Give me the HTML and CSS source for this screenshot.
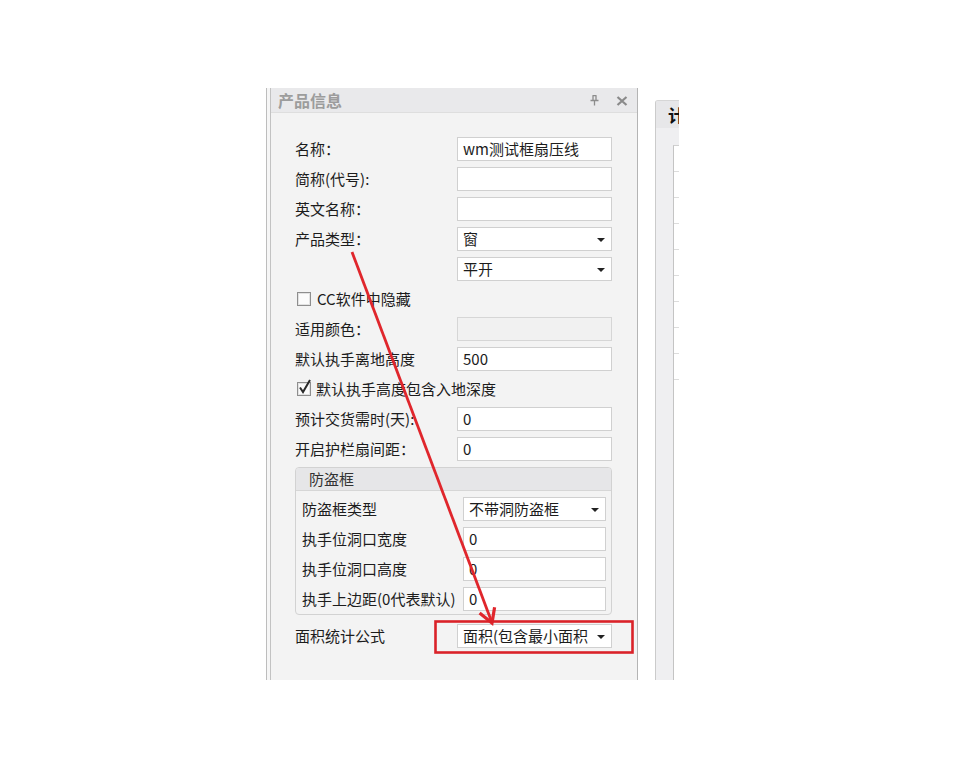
FILE: index.html
```html
<!DOCTYPE html>
<html lang="zh-CN">
<head>
<meta charset="utf-8">
<title>产品信息</title>
<link rel="stylesheet" href="styles.css">
</head>
<body>
<div class="stage">
  <section class="panel">
    <div class="panel-inner">
      <header class="panel-title">
        <span class="title-text">产品信息</span>
        <span class="tools">
          <svg class="pin" width="9" height="11" viewBox="0 0 9 11"><path d="M2.5 0.5h4M3 0.5v5M6 0.5v5M0.5 5.5h8M4.5 5.5v5" stroke="#8c8c8c" stroke-width="1.3" fill="none"/></svg>
          <svg class="close" width="12" height="10" viewBox="0 0 12 10"><path d="M1.5 1l9 8M10.5 1l-9 8" stroke="#8a8a8a" stroke-width="2.2" fill="none"/></svg>
        </span>
      </header>
      <div class="panel-body">
        <div class="form">
          <label class="lbl">名称：</label>
          <div class="field">wm测试框扇压线</div>

          <label class="lbl">简称(代号):</label>
          <div class="field"></div>

          <label class="lbl">英文名称：</label>
          <div class="field"></div>

          <label class="lbl">产品类型：</label>
          <div class="field select">窗<span class="caret"></span></div>

          <span class="lbl"></span>
          <div class="field select">平开<span class="caret"></span></div>

          <div class="check-row">
            <span class="box"></span><span class="check-text">CC软件中隐藏</span>
          </div>

          <label class="lbl">适用颜色：</label>
          <div class="field disabled"></div>

          <label class="lbl">默认执手离地高度</label>
          <div class="field">500</div>

          <div class="check-row">
            <span class="box checked"><svg width="15" height="16" viewBox="0 0 15 16"><path d="M3 8.5l3 4.5 7-12" stroke="#2b2b2b" stroke-width="2" fill="none"/></svg></span><span class="check-text">默认执手高度包含入地深度</span>
          </div>

          <label class="lbl">预计交货需时(天):</label>
          <div class="field">0</div>

          <label class="lbl">开启护栏扇间距：</label>
          <div class="field">0</div>

          <fieldset class="group">
            <div class="group-head">防盗框</div>
            <div class="group-body">
              <label class="lbl">防盗框类型</label>
              <div class="field select">不带洞防盗框<span class="caret"></span></div>

              <label class="lbl">执手位洞口宽度</label>
              <div class="field">0</div>

              <label class="lbl">执手位洞口高度</label>
              <div class="field">0</div>

              <label class="lbl">执手上边距(0代表默认)</label>
              <div class="field">0</div>
            </div>
          </fieldset>

          <label class="lbl last">面积统计公式</label>
          <div class="field select last">面积(包含最小面积<span class="caret"></span></div>
        </div>
      </div>
    </div>
  </section>

  <section class="side">
    <header class="side-head">计</header>
    <div class="side-body">
      <div class="side-grid">
        <div class="side-row"></div><div class="side-row"></div><div class="side-row"></div>
        <div class="side-row"></div><div class="side-row"></div><div class="side-row"></div>
        <div class="side-row"></div><div class="side-row"></div><div class="side-row"></div>
      </div>
    </div>
  </section>

  <svg class="annot" width="980" height="784" viewBox="0 0 980 784">
    <line x1="352" y1="252" x2="491" y2="620" stroke="#e0262c" stroke-width="2.8"/>
    <polyline points="479.6,612.9 492,623 494.6,607.2" stroke="#e0262c" stroke-width="3.2" fill="none" stroke-linejoin="miter"/>
    <rect x="435.5" y="621.5" width="197" height="31" stroke="#da2229" stroke-width="2.6" fill="none"/>
  </svg>
</div>
</body>
</html>
```

FILE: styles.css
```css
html, body {
  margin: 0;
  padding: 0;
  background: #ffffff;
}

body {
  font-family: "Noto Sans CJK SC", "Microsoft YaHei", sans-serif;
  font-size: 15px;
  color: #1c1c1c;
}

.stage {
  position: relative;
  width: 980px;
  height: 784px;
  box-sizing: border-box;
  padding: 88px 0 0 266px;
  display: flex;
  align-items: flex-start;
}

/* ---------- main panel ---------- */
.panel {
  width: 372px;
  height: 592px;
  box-sizing: border-box;
  border-left: 1px solid #bdbdbd;
  padding-left: 3px;
  background: #f6f6f6;
}

.panel-inner {
  height: 100%;
  box-sizing: border-box;
  border-left: 1px solid #c2c2c2;
  border-right: 1px solid #b4b4b4;
  background: #f3f3f3;
  display: flex;
  flex-direction: column;
}

.panel-title {
  height: 24px;
  flex: none;
  display: flex;
  align-items: center;
  justify-content: space-between;
  padding: 0 9px 0 7px;
  background: #e9e9eb;
  border-bottom: 1px solid #dedede;
}

.title-text {
  font-size: 16px;
  font-weight: bold;
  color: #9c9c9c;
  line-height: 24px;
}

.tools {
  display: flex;
  align-items: center;
  gap: 17px;
  padding-top: 1px;
}

.panel-body {
  flex: 1;
  padding: 24px 0 0 24px;
}

.form {
  width: 317px;
  display: grid;
  grid-template-columns: 162px 155px;
  grid-auto-rows: 24px;
  row-gap: 6px;
}

.lbl {
  display: block;
  height: 24px;
  line-height: 24px;
  white-space: nowrap;
  color: #1c1c1c;
}

.field {
  position: relative;
  height: 24px;
  box-sizing: border-box;
  border: 1px solid #d0d0d0;
  background: #ffffff;
  padding-left: 5px;
  line-height: 22px;
  color: #1c1c1c;
  white-space: nowrap;
  overflow: hidden;
}

.field.disabled {
  background: #f1f1f1;
  border-color: #d6d6d6;
}

.caret {
  position: absolute;
  right: 6px;
  top: 10px;
  width: 0;
  height: 0;
  border-left: 4px solid transparent;
  border-right: 4px solid transparent;
  border-top: 4px solid #222;
}

.check-row {
  grid-column: 1 / -1;
  display: flex;
  align-items: center;
  padding-left: 2px;
  height: 24px;
}

.box {
  position: relative;
  width: 14px;
  height: 14px;
  box-sizing: border-box;
  border: 1px solid #8e8e8e;
  background: #fbfbfb;
  box-shadow: inset 0 0 0 1px #e2e2e2;
  flex: none;
}

.box.checked svg {
  position: absolute;
  left: -1px;
  top: -4px;
}

.check-text {
  margin-left: 6px;
  line-height: 24px;
}

.check-row .box.checked + .check-text {
  margin-left: 5px;
}

/* ---------- group box ---------- */
.group {
  grid-column: 1 / -1;
  grid-row: span 5;
  margin: 0;
  padding: 0;
  min-width: 0;
  border: 1px solid #d2d2d2;
  border-radius: 4px;
  background: #f3f3f3;
  align-self: start;
  height: 148px;
  box-sizing: border-box;
}

.group-head {
  height: 22px;
  line-height: 22px;
  padding-left: 13px;
  background: #e6e6e8;
  border-bottom: 1px solid #d6d6d6;
  border-radius: 3px 3px 0 0;
  color: #333;
}

.group-body {
  padding: 6px 5px 3px 6px;
  display: grid;
  grid-template-columns: 161px 143px;
  grid-auto-rows: 24px;
  row-gap: 6px;
}

.lbl.last,
.field.last {
  grid-row-start: 17;
  margin-top: 7px;
}

/* ---------- side panel ---------- */
.side {
  margin: 12px 0 0 17px;
  width: 24px;
  height: 580px;
  overflow: hidden;
  box-sizing: border-box;
  border-left: 1px solid #cbcbcb;
  border-top: 1px solid #d6d6d6;
  border-radius: 3px 0 0 0;
  background: #efeff1;
  display: flex;
  flex-direction: column;
}

.side-head {
  height: 27px;
  flex: none;
  background: #e7e7e9;
  padding-left: 12px;
  font-size: 17px;
  font-weight: bold;
  line-height: 27px;
  color: #111;
  white-space: nowrap;
}

.side-body {
  flex: 1;
  padding: 17px 0 0 17px;
}

.side-grid {
  height: 100%;
  border-left: 1px solid #c4c4c4;
  border-top: 1px solid #d0d0d0;
  background: #ffffff;
}

.side-row {
  height: 25px;
  border-bottom: 1px solid #dcdcdc;
}

/* ---------- annotation overlay ---------- */
.annot {
  position: absolute;
  left: 0;
  top: 0;
  pointer-events: none;
}
```
